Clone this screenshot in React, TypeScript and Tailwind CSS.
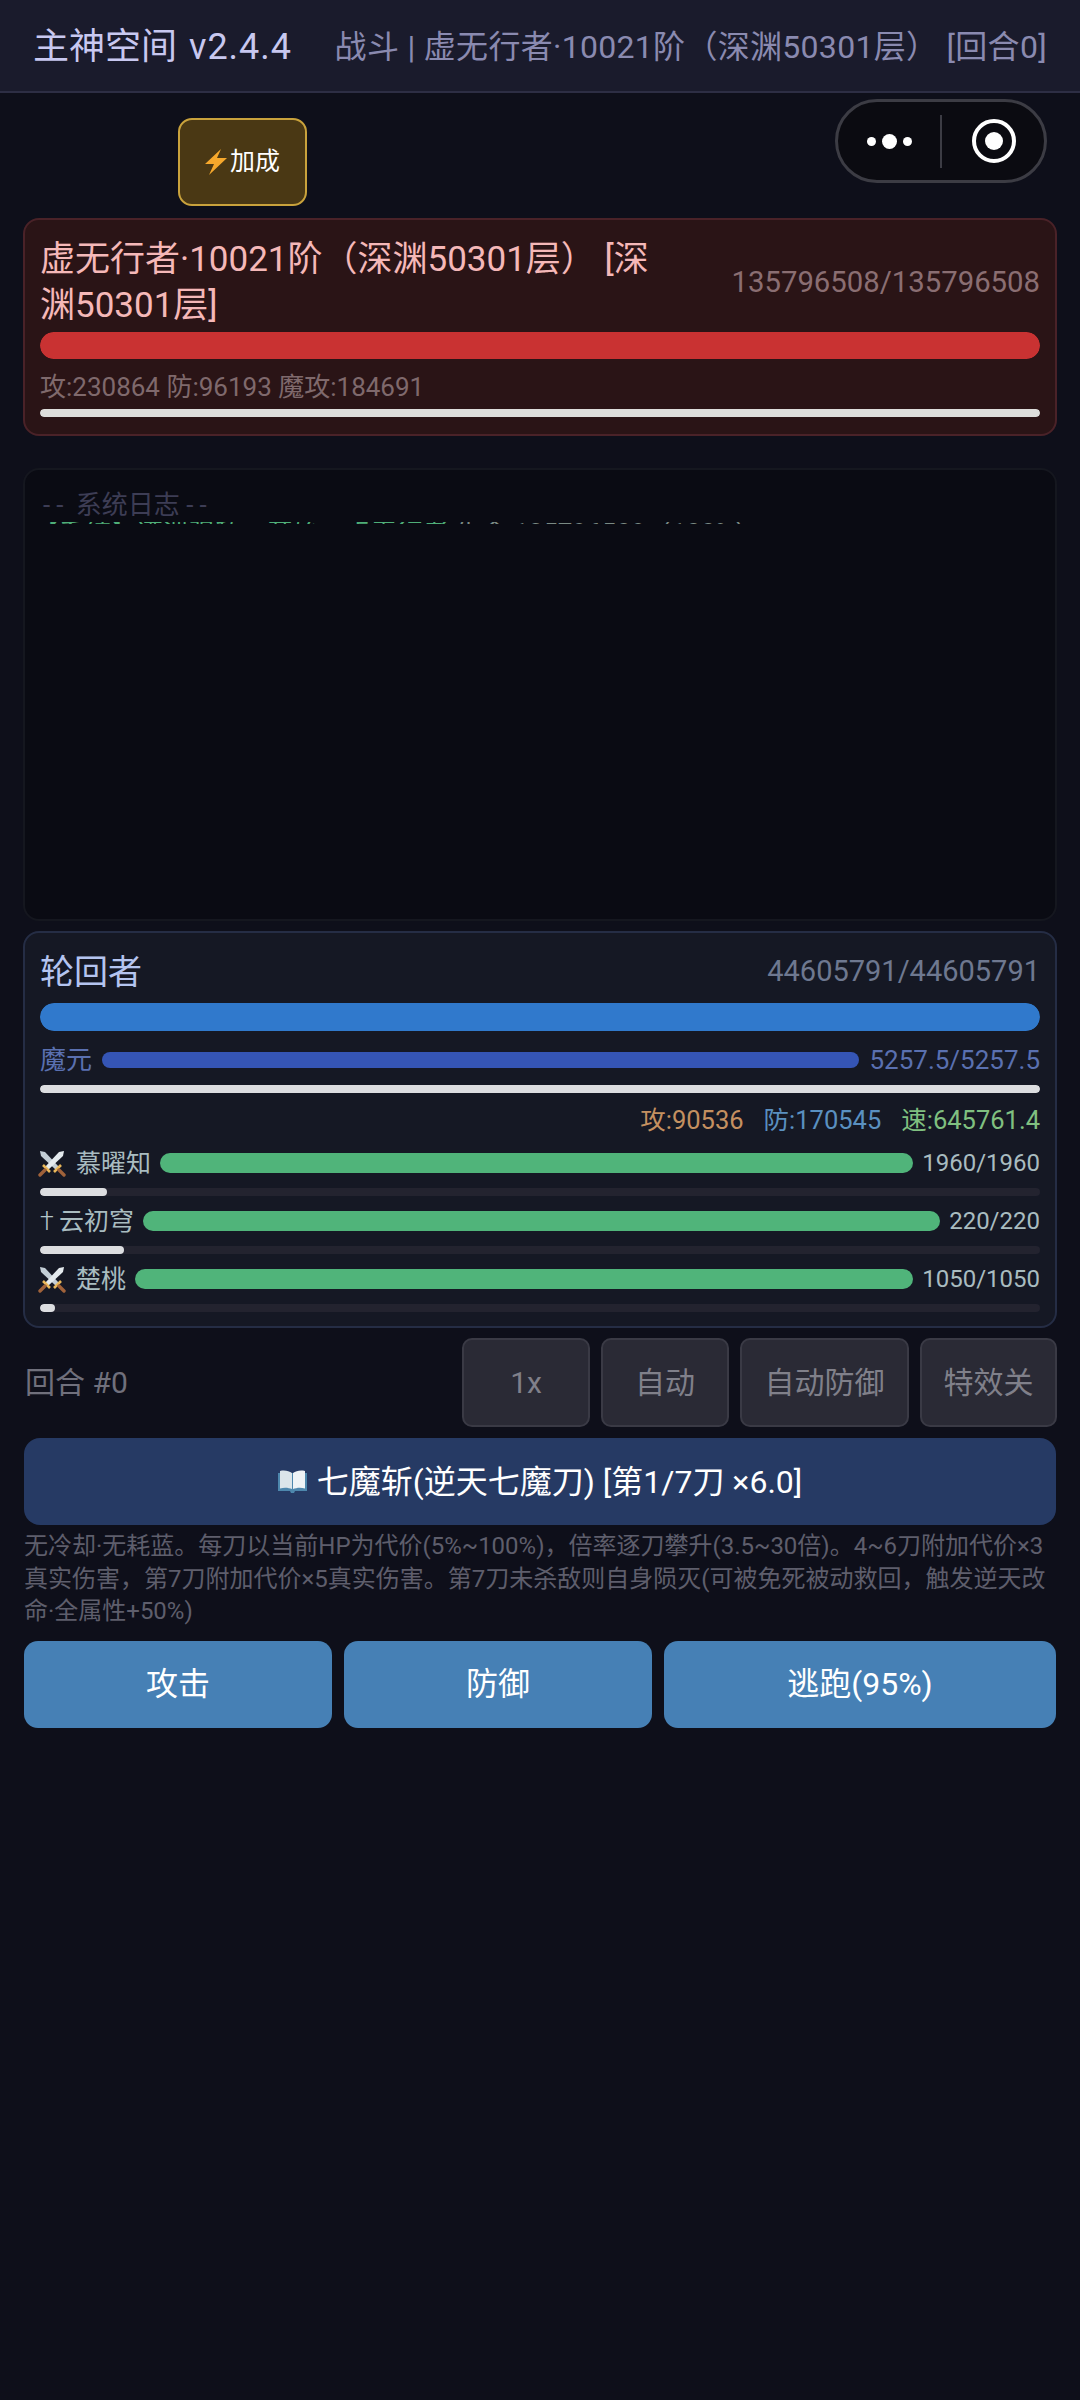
import React from 'react';

const font = "font-['Roboto','Noto_Sans_CJK_SC',sans-serif]";

function Swords() {
  return (
    <svg width="28" height="28" viewBox="0 0 28 28" className="shrink-0 -ml-[2px]">
      <path d="M2 2 L7 3 L21 18 L18 21 L3 7 Z" fill="#c3ced6" />
      <path d="M26 2 L21 3 L7 18 L10 21 L25 7 Z" fill="#e4eaee" />
      <path d="M16 23 L23 16 M5 16 L12 23" stroke="#eab85a" strokeWidth="2.6" />
      <path d="M21 21 L26 26 M7 21 L2 26" stroke="#a0623a" strokeWidth="3.4" strokeLinecap="round" />
    </svg>
  );
}

function Book() {
  return (
    <svg width="29" height="24" viewBox="0 0 29 24" className="shrink-0">
      <path d="M0 3 H29 V21 H17 L16 23 H13 L12 21 H0 Z" fill="#4d87ad" />
      <path d="M2 1 C7 0 11 1 14 3 V19 C11 18 7 17 2 18.5 Z" fill="#dbe5ea" />
      <path d="M27 1 C22 0 18 1 15 3 V19 C18 18 22 17 27 18.5 Z" fill="#eef3f6" />
    </svg>
  );
}

function Bar({ color, h, fill = '100%', track }: { color: string; h: string; fill?: string; track?: string }) {
  return (
    <div className={`w-full rounded-full overflow-hidden ${h} ${track ?? ''}`}>
      <div className={`h-full rounded-full ${color}`} style={{ width: fill }} />
    </div>
  );
}

const allies = [
  { icon: 'sword', name: '慕曜知', hp: '1960/1960', fill: '6.7%' },
  { icon: 'dead', name: '云初穹', hp: '220/220', fill: '8.4%' },
  { icon: 'sword', name: '楚桃', hp: '1050/1050', fill: '1.5%' },
];

function Ally({ icon, name, hp, fill }: { icon: string; name: string; hp: string; fill: string }) {
  return (
    <div>
      <div className="flex items-center h-[26px] text-[25px] text-[#a9bcc0]">
        {icon === 'sword' ? <Swords /> : <span className="w-[9px] leading-none font-light text-[#b4c6ca]">†</span>}
        <span className="ml-[10px] whitespace-nowrap leading-none">{name}</span>
        <div className="flex-1 mx-[9px] h-[20px] rounded-full bg-[#50b47a]" />
        <span className="whitespace-nowrap leading-none text-[24px]">{hp}</span>
      </div>
      <div className="mt-[12px]">
        <Bar color="bg-[#dcdde0]" h="h-[8px]" fill={fill} track="bg-[#23232f]" />
      </div>
    </div>
  );
}

function Ctrl({ w, children }: { w: string; children: React.ReactNode }) {
  return (
    <div className={`${w} h-[89px] flex items-center justify-center rounded-[10px] border-2 border-[#3a3a45] bg-[#2a2a35] text-[30px] text-[#80808a]`}>
      {children}
    </div>
  );
}

export default function App() {
  return (
    <div className={`${font} w-[1080px] h-[2400px] bg-[#0e0f1a] overflow-hidden`}>
      <header className="h-[93px] flex items-center justify-between px-[33px] pt-[2px] bg-[#1a1b2c] border-b-2 border-[#2d2e44] whitespace-nowrap">
        <span className="text-[36px] text-[#c8c8f0]">主神空间 <span className="ml-[3px] tracking-[1px]">v2.4.4</span></span>
        <span className="text-[32px] tracking-[0.3px] text-[#8a8ab0]">战斗 | 虚无行者·10021阶（深渊50301层） [回合0]</span>
      </header>

      <div className="relative h-[125px]">
        <div className="absolute left-[178px] top-[25px] w-[129px] h-[88px] rounded-[14px] border-2 border-[#c9a23c] bg-[#4a3814] flex items-center justify-center gap-[3px] text-[25px] text-white">
          <svg width="22" height="26" viewBox="0 0 22 26" className="shrink-0">
            <path d="M16 0 L0 15 H9 L4 26 L22 9 H12 Z" fill="#f6a82c" />
          </svg>
          <span>加成</span>
        </div>
        <div className="absolute left-[835px] top-[6px] w-[212px] h-[84px] rounded-full border-[3px] border-[#3c3c44] bg-[#0b0b11] flex items-center">
          <div className="w-[102px] flex items-center justify-center gap-[6px]">
            <span className="w-[9px] h-[9px] rounded-full bg-white" />
            <span className="w-[15px] h-[15px] rounded-full bg-white" />
            <span className="w-[9px] h-[9px] rounded-full bg-white" />
          </div>
          <div className="w-[2px] h-[53px] bg-[#3c3c44]" />
          <div className="flex-1 flex items-center justify-center pl-[2px]">
            <div className="w-[44px] h-[44px] rounded-full border-[4px] border-white flex items-center justify-center">
              <div className="w-[18px] h-[18px] rounded-full bg-white" />
            </div>
          </div>
        </div>
      </div>

      <div className="px-[23px] flex flex-col">
        <section className="h-[218px] rounded-[16px] border-2 border-[#4a2228] bg-[#2a1416] px-[15px] pt-[17px]">
          <div className="flex items-center justify-between">
            <div className="w-[640px] text-[35px] leading-[46px] text-[#f5b8b8]">虚无行者·10021阶（深渊50301层） [深渊50301层]</div>
            <div className="text-[29.3px] text-[#8a6e72] whitespace-nowrap">135796508/135796508</div>
          </div>
          <div className="mt-[3px]"><Bar color="bg-[#c93232]" h="h-[27px]" /></div>
          <div className="mt-[12px] h-[32px] flex items-center text-[26px] text-[#7f696c] whitespace-nowrap">攻:230864 防:96193 魔攻:184691</div>
          <div className="mt-[6px]"><Bar color="bg-[#dddddb]" h="h-[8px]" /></div>
        </section>

        <section className="mt-[32px] h-[453px] rounded-[16px] border-2 border-[#15171f] bg-[#0a0b13] px-[18px] overflow-hidden">
          <div className="pt-[19px] h-[52px] text-[26px] leading-[32px] text-[#3d3d55] whitespace-nowrap">
            <span className="tracking-[6px]">--</span> 系统日志 <span className="tracking-[6px]">--</span>
          </div>
          <div className="h-[2px] -ml-[10px] overflow-hidden">
            <div className="-mt-[2px] text-[26px] leading-[26px] whitespace-nowrap">
              <span className="text-[#4fae78]">【系统】遭遇强敌，开始：虚无行者</span>
              <span className="text-[#7a8a84]"> 生命 135796508（100%）</span>
            </div>
          </div>
        </section>

        <section className="mt-[10px] h-[397px] rounded-[16px] border-2 border-[#252d45] bg-[#151824] px-[15px] pt-[19px]">
          <div className="flex items-center justify-between h-[40px]">
            <span className="text-[34px] text-[#b4c4f0]">轮回者</span>
            <span className="text-[29px] text-[#6e7890]">44605791/44605791</span>
          </div>
          <div className="mt-[11px]"><Bar color="bg-[#3079cc]" h="h-[28px]" /></div>
          <div className="mt-[20px] flex items-center h-[18px] text-[26px] text-[#5a70b0]">
            <span className="leading-none">魔元</span>
            <div className="flex-1 ml-[10px] mr-[10px] h-[16px] rounded-full bg-[#3555b5]" />
            <span className="leading-none">5257.5/5257.5</span>
          </div>
          <div className="mt-[16px]"><Bar color="bg-[#dcdde0]" h="h-[8px]" /></div>
          <div className="mt-[11px] h-[32px] flex items-center justify-end gap-[20px] text-[25.5px] whitespace-nowrap">
            <span className="text-[#c49060]">攻:90536</span>
            <span className="text-[#5a90c0]">防:170545</span>
            <span className="text-[#80c080]">速:645761.4</span>
          </div>
          <div className="mt-[14px] flex flex-col gap-[12px]">
            {allies.map((a) => <Ally key={a.name} {...a} />)}
          </div>
        </section>

        <div className="mt-[10px] flex items-center">
          <span className="flex-1 text-[30px] text-[#70707c] pl-[2px]">回合 #0</span>
          <div className="flex gap-[11px]">
            <Ctrl w="w-[128px]">1x</Ctrl>
            <Ctrl w="w-[128px]">自动</Ctrl>
            <Ctrl w="w-[169px]">自动防御</Ctrl>
            <Ctrl w="w-[137px]">特效关</Ctrl>
          </div>
        </div>

        <div className="mx-[1px] mt-[11px] h-[87px] rounded-[16px] bg-[#263a64] flex items-center justify-center gap-[10px] text-[32px] text-white">
          <Book />
          <span>七魔斩(逆天七魔刀) [第1/7刀 ×6.0]</span>
        </div>

        <p className="mx-[1px] mt-[5px] text-[24px] leading-[32.5px] text-[#5e5e6c]">
          无冷却·无耗蓝。每刀以当前HP为代价(5%~100%)，倍率逐刀攀升(3.5~30倍)。4~6刀附加代价×3真实伤害，第7刀附加代价×5真实伤害。第7刀未杀敌则自身陨灭(可被免死被动救回，触发逆天改命·全属性+50%)
        </p>

        <div className="mx-[1px] mt-[13px] flex gap-[12px] text-[32px] text-white">
          <div className="w-[308px] h-[87px] rounded-[14px] bg-[#4680b5] flex items-center justify-center">攻击</div>
          <div className="w-[308px] h-[87px] rounded-[14px] bg-[#4680b5] flex items-center justify-center">防御</div>
          <div className="flex-1 h-[87px] rounded-[14px] bg-[#4680b5] flex items-center justify-center">逃跑(95%)</div>
        </div>
      </div>
    </div>
  );
}
